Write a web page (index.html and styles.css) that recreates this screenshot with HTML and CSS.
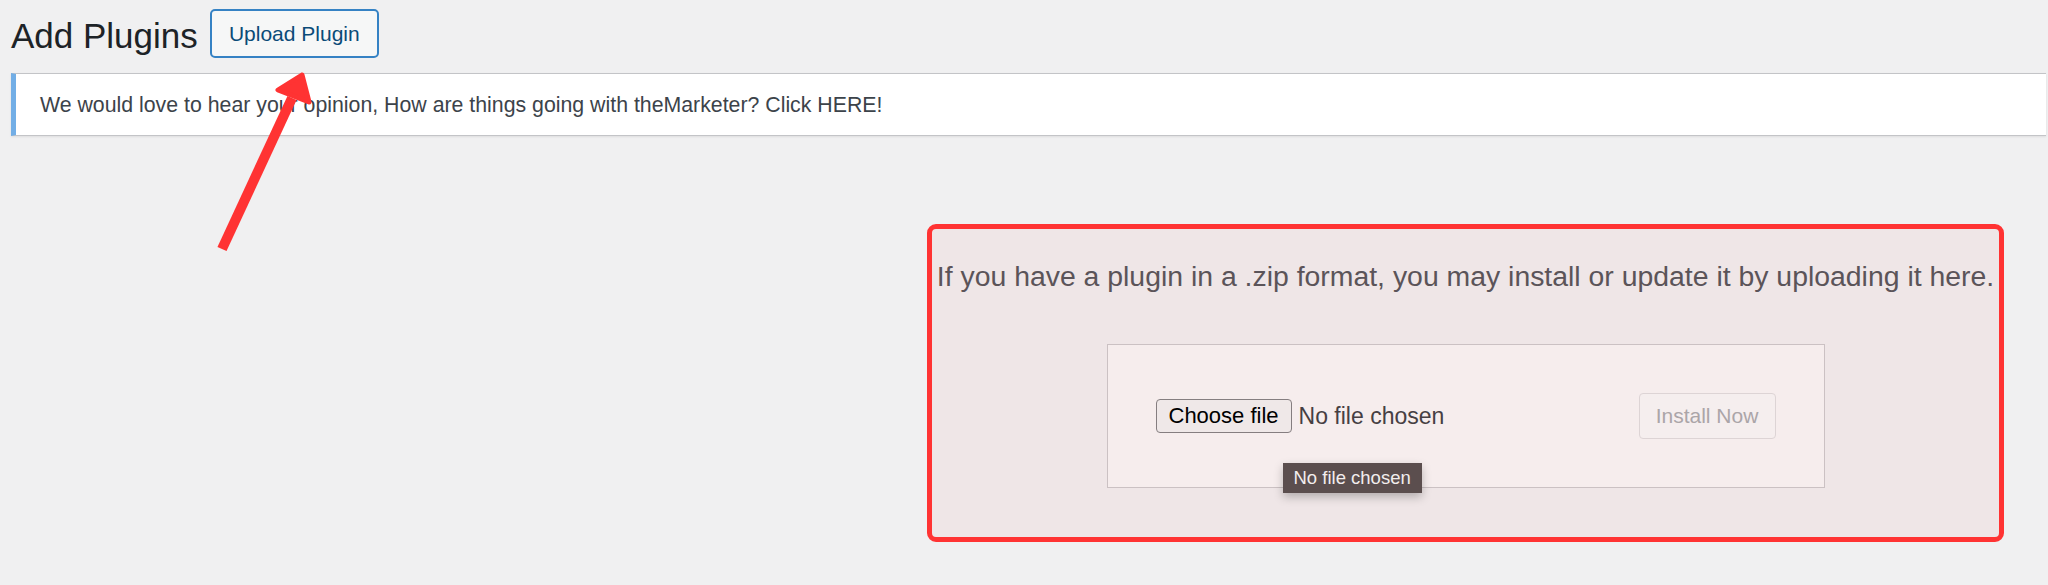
FILE: index.html
```html
<!DOCTYPE html>
<html lang="en">
<head>
  <meta charset="UTF-8" />
  <title>Add Plugins</title>
  <link rel="stylesheet" href="styles.css">
</head>
<body>
  <div class="wrap">
    <div class="page-head">
      <h1>Add Plugins</h1>
      <button class="upload-toggle">Upload Plugin</button>
    </div>

    <div class="notice">
      We would love to hear your opinion, How are things going with theMarketer? Click HERE!
    </div>

    <div class="upload-plugin">
      <p class="install-help">If you have a plugin in a .zip format, you may install or update it by uploading it here.</p>
      <form class="upload-form">
        <div class="file-field">
          <span class="file-btn">Choose file</span>
          <span class="file-name">No file chosen</span>
          <span class="tooltip">No file chosen</span>
        </div>
        <button type="button" class="install-btn" disabled>Install Now</button>
      </form>
    </div>
  </div>

  <!-- annotation arrow -->
  <svg class="arrow" width="400" height="300" viewBox="0 0 400 300">
    <line x1="222" y1="249" x2="292" y2="98" stroke="#ff3333" stroke-width="10" />
    <polygon points="302,75 278,90 309,102" fill="#ff3333" stroke="#ff3333" stroke-width="5" stroke-linejoin="round" />
  </svg>
</body>
</html>
```

FILE: styles.css
```css
body {
  margin: 0;
  background-color: #f0f0f1;
  font-family: "Liberation Sans", Arial, sans-serif;
  position: relative;
  height: 585px;
  overflow: hidden;
}
.wrap {
  padding: 9px 2px 0 11px;
}
.page-head {
  display: flex;
  align-items: flex-start;
  gap: 12px;
}
h1 {
  margin: 2px 0 0 0;
  font-size: 35px;
  line-height: 49px;
  font-weight: 400;
  color: #1d2327;
}
.upload-toggle {
  height: 49px;
  width: 169px;
  padding: 0;
  font-family: inherit;
  font-size: 21px;
  color: #0a4b78;
  background: #f6f7f7;
  border: 2px solid #3582c4;
  border-radius: 5px;
}
.notice {
  margin-top: 13px;
  background: #fff;
  border-top: 1px solid #c3c4c7;
  border-bottom: 1px solid #c3c4c7;
  border-left: 5px solid #72aee6;
  box-shadow: 0 1px 2px rgba(0,0,0,0.08);
  padding: 19px 20px 17px 24px;
  font-size: 21.3px;
  line-height: 25px;
  color: #3c434a;
}
.upload-plugin {
  box-sizing: border-box;
  width: 1077px;
  height: 318px;
  margin: 88px 42px 0 auto;
  border: 5px solid #ff3333;
  border-radius: 9px;
  background: #efe6e7;
  text-align: center;
}
.install-help {
  margin: 29px 0 0 0;
  font-size: 28.4px;
  line-height: 36px;
  color: #5b5459;
}
.upload-form {
  box-sizing: border-box;
  width: 718px;
  margin: 50px auto 0;
  padding: 48px;
  display: flex;
  justify-content: space-between;
  align-items: center;
  background: #f6eded;
  border: 1px solid #cbc1c3;
}
.file-field {
  position: relative;
  display: flex;
  align-items: center;
  gap: 7px;
}
.file-btn {
  box-sizing: border-box;
  height: 34px;
  padding: 0 12px;
  font-size: 22px;
  line-height: 32px;
  color: #000;
  background: #efe8e8;
  border: 1px solid #857e80;
  border-radius: 4px;
}
.file-name {
  font-size: 23px;
  color: #463f43;
}
.tooltip {
  position: absolute;
  left: 127px;
  top: 64px;
  height: 30px;
  padding: 0 11px;
  font-size: 18.5px;
  line-height: 30px;
  white-space: nowrap;
  color: #f2eded;
  background: #5b4e4e;
  box-shadow: 0 4px 10px rgba(0,0,0,0.25);
}
.install-btn {
  box-sizing: border-box;
  width: 137px;
  height: 46px;
  padding: 0;
  font-family: inherit;
  font-size: 21px;
  color: #aba5a8;
  background: #f5eeee;
  border: 1px solid #ddd4d5;
  border-radius: 4px;
}
.arrow {
  position: absolute;
  left: 0;
  top: 0;
  pointer-events: none;
}
```
